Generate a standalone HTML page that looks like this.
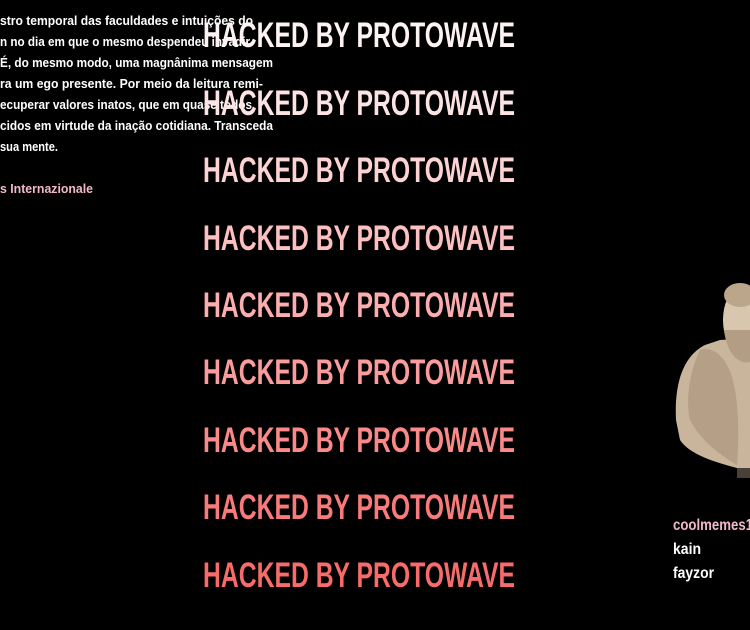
<!DOCTYPE html>
<html><head><meta charset="utf-8"><style>
html,body{margin:0;padding:0;background:#000;width:750px;height:630px;overflow:hidden}
svg{display:block}
.p{font-family:"Liberation Sans Narrow","Liberation Sans",sans-serif;font-weight:bold;font-size:13px;fill:#fff}
.h{font-family:"Liberation Sans Narrow","Liberation Sans",sans-serif;font-weight:bold;font-size:35px}
.n{font-family:"Liberation Sans Narrow","Liberation Sans",sans-serif;font-weight:bold;font-size:16px}
</style></head><body>
<svg width="750" height="630" viewBox="0 0 750 630" xmlns="http://www.w3.org/2000/svg">
<rect width="750" height="630" fill="#000"/>
<g class="p">
<text x="0" y="25" textLength="253" lengthAdjust="spacingAndGlyphs">stro temporal das faculdades e intuições do</text>
<text x="0" y="46" textLength="250" lengthAdjust="spacingAndGlyphs">n no dia em que o mesmo despendeu invadir</text>
<text x="0" y="67" textLength="273" lengthAdjust="spacingAndGlyphs">É, do mesmo modo, uma magnânima mensagem</text>
<text x="0" y="88" textLength="263" lengthAdjust="spacingAndGlyphs">ra um ego presente. Por meio da leitura remi-</text>
<text x="0" y="109" textLength="252" lengthAdjust="spacingAndGlyphs">ecuperar valores inatos, que em quase todos</text>
<text x="0" y="130" textLength="273" lengthAdjust="spacingAndGlyphs">cidos em virtude da inação cotidiana. Transceda</text>
<text x="0" y="151" textLength="58" lengthAdjust="spacingAndGlyphs">sua mente.</text>
<text x="0" y="193" textLength="93" lengthAdjust="spacingAndGlyphs" fill="#f2b8cc">s Internazionale</text>
</g>
<g class="h">
<text x="203" y="47" textLength="312" lengthAdjust="spacingAndGlyphs" fill="#fdf3f3">HACKED BY PROTOWAVE</text>
<text x="203" y="115" textLength="312" lengthAdjust="spacingAndGlyphs" fill="#fde4e4">HACKED BY PROTOWAVE</text>
<text x="203" y="182" textLength="312" lengthAdjust="spacingAndGlyphs" fill="#fdd2d2">HACKED BY PROTOWAVE</text>
<text x="203" y="250" textLength="312" lengthAdjust="spacingAndGlyphs" fill="#fcc0c0">HACKED BY PROTOWAVE</text>
<text x="203" y="317" textLength="312" lengthAdjust="spacingAndGlyphs" fill="#fcaeae">HACKED BY PROTOWAVE</text>
<text x="203" y="384" textLength="312" lengthAdjust="spacingAndGlyphs" fill="#fb9c9c">HACKED BY PROTOWAVE</text>
<text x="203" y="452" textLength="312" lengthAdjust="spacingAndGlyphs" fill="#fa8a8a">HACKED BY PROTOWAVE</text>
<text x="203" y="519" textLength="312" lengthAdjust="spacingAndGlyphs" fill="#f97a7a">HACKED BY PROTOWAVE</text>
<text x="203" y="587" textLength="312" lengthAdjust="spacingAndGlyphs" fill="#f86b6b">HACKED BY PROTOWAVE</text>
</g>
<g>
<path d="M676 420 C674 380 685 355 705 345 L720 340 L750 338 L750 478 L737 478 L737 468 C715 462 690 455 680 440 Z" fill="#c9b59c"/>
<path d="M700 350 C715 345 730 360 735 390 C740 420 738 450 737 465 C720 455 700 440 690 420 C685 400 690 370 700 350Z" fill="#a8917a" opacity="0.6"/>
<ellipse cx="738" cy="320" rx="15" ry="30" fill="#d8c7ae"/>
<ellipse cx="740" cy="295" rx="16" ry="12" fill="#bba68b"/>
<path d="M724 330 C727 355 740 365 750 362 L750 330 Z" fill="#b39e85"/>
<rect x="737" y="468" width="13" height="10" fill="#4a4038"/>
</g>
<g class="n">
<text x="673" y="530" textLength="80" lengthAdjust="spacingAndGlyphs" fill="#f2b8cc">coolmemes1</text>
<text x="673" y="554" textLength="28" lengthAdjust="spacingAndGlyphs" fill="#fff">kain</text>
<text x="673" y="578" textLength="41" lengthAdjust="spacingAndGlyphs" fill="#fff">fayzor</text>
</g>
</svg>
</body></html>
